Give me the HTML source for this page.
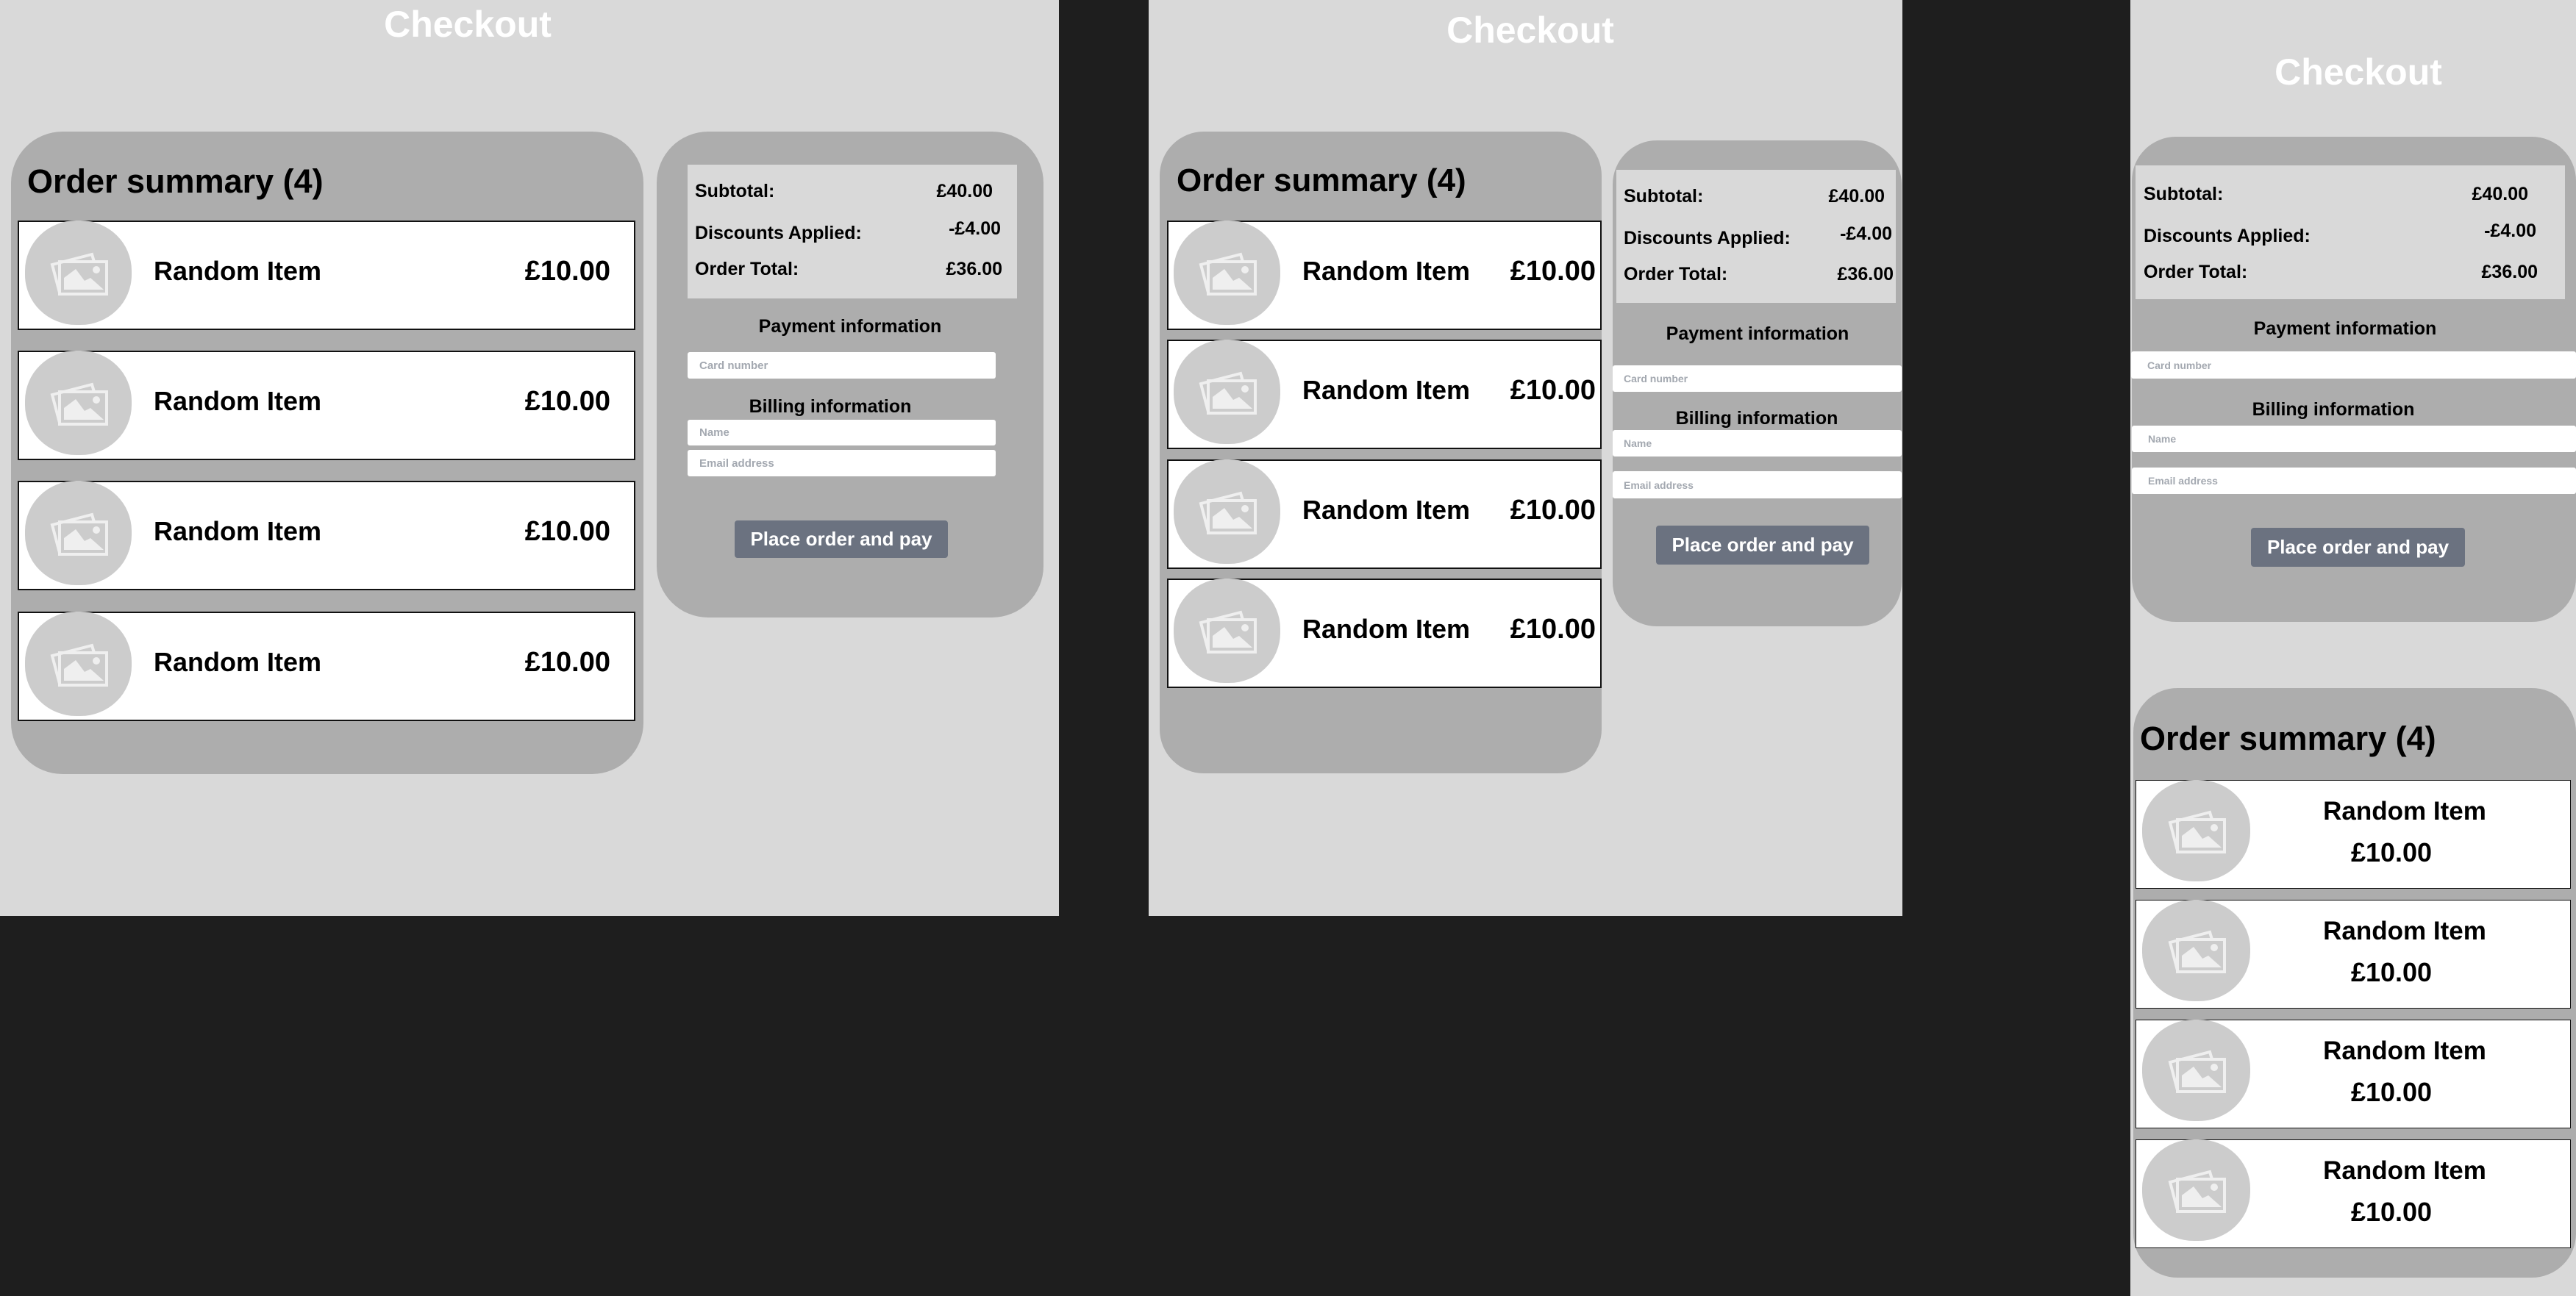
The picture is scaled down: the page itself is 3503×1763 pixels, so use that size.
<!DOCTYPE html>
<html><head><meta charset="utf-8"><style>
*{margin:0;padding:0;box-sizing:border-box}
body{width:3503px;height:1763px;background:#1e1e1e;position:relative;overflow:hidden;font-family:"Liberation Sans",Arial,sans-serif;color:#000}
.bg{position:absolute;background:#d9d9d9}
.pan{position:absolute;background:#adadad}
.tot{position:absolute;background:#d9d9d9}
.t{position:absolute;white-space:nowrap;line-height:1;font-weight:bold}
.c{text-align:center;width:1000px}
.title{font-size:50px;font-weight:bold;color:#fff}
.card{position:absolute;background:#fff;border:2px solid #111}
.circ{position:absolute;background:#cccccc;border-radius:48%;display:flex;align-items:center;justify-content:center}
.inp{position:absolute;background:#fff;border-radius:3px;color:#a3a8b0;font-weight:bold;display:flex;align-items:center}
.btn{position:absolute;background:#6b7280;border-radius:4px;color:#fff;font-weight:bold;display:flex;align-items:center;justify-content:center}
</style></head><body>
<svg width="0" height="0" style="position:absolute"><defs><symbol id="ic" viewBox="0 0 80 62"><g fill="none" stroke="#efefef" stroke-width="4"><path d="M14 58 L4 20 L58 6 L61 16"/><rect x="14" y="16" width="64" height="44"/></g><path d="M20 54 L20 38 L36 26 L48 42 L56 38 L74 54Z" fill="#efefef"/><circle cx="64" cy="27" r="5" fill="#efefef"/></symbol></defs></svg>

<!-- PANEL 1 -->
<div class="bg" style="left:0;top:0;width:1440px;height:1246px"></div>
<div class="t c title" style="left:136px;top:8px">Checkout</div>
<div class="pan" style="left:15px;top:179px;width:860px;height:874px;border-radius:70px"></div>
<div class="t" style="left:37px;top:224px;font-size:45px">Order summary (4)</div>
<div class="card" style="left:24px;top:300px;width:840px;height:149px"></div>
<div class="card" style="left:24px;top:477px;width:840px;height:149px"></div>
<div class="card" style="left:24px;top:654px;width:840px;height:149px"></div>
<div class="card" style="left:24px;top:832px;width:840px;height:149px"></div>
<div class="circ" style="left:34px;top:300px;width:145px;height:142px"><svg width="80" height="62"><use href="#ic"/></svg></div>
<div class="circ" style="left:34px;top:477px;width:145px;height:142px"><svg width="80" height="62"><use href="#ic"/></svg></div>
<div class="circ" style="left:34px;top:654px;width:145px;height:142px"><svg width="80" height="62"><use href="#ic"/></svg></div>
<div class="circ" style="left:34px;top:832px;width:145px;height:142px"><svg width="80" height="62"><use href="#ic"/></svg></div>
<div class="t" style="left:209px;top:351px;font-size:36px">Random Item</div>
<div class="t" style="right:2673px;top:350px;font-size:38px">£10.00</div>
<div class="t" style="left:209px;top:528px;font-size:36px">Random Item</div>
<div class="t" style="right:2673px;top:527px;font-size:38px">£10.00</div>
<div class="t" style="left:209px;top:705px;font-size:36px">Random Item</div>
<div class="t" style="right:2673px;top:704px;font-size:38px">£10.00</div>
<div class="t" style="left:209px;top:883px;font-size:36px">Random Item</div>
<div class="t" style="right:2673px;top:882px;font-size:38px">£10.00</div>
<div class="pan" style="left:893px;top:179px;width:526px;height:661px;border-radius:70px"></div>
<div class="tot" style="left:935px;top:224px;width:448px;height:182px"></div>
<div class="t" style="left:945px;top:248px;font-size:25px">Subtotal:</div>
<div class="t" style="right:2153px;top:248px;font-size:25px">£40.00</div>
<div class="t" style="left:945px;top:305px;font-size:25px">Discounts Applied:</div>
<div class="t" style="right:2142px;top:299px;font-size:25px">-£4.00</div>
<div class="t" style="left:945px;top:354px;font-size:25px">Order Total:</div>
<div class="t" style="right:2140px;top:354px;font-size:25px">£36.00</div>
<div class="t c" style="left:656px;top:432px;font-size:25px">Payment information</div>
<div class="inp" style="left:935px;top:479px;width:419px;height:36px;font-size:15px;padding-left:16px">Card number</div>
<div class="t c" style="left:629px;top:541px;font-size:25px">Billing information</div>
<div class="inp" style="left:935px;top:571px;width:419px;height:35px;font-size:15px;padding-left:16px">Name</div>
<div class="inp" style="left:935px;top:612px;width:419px;height:36px;font-size:15px;padding-left:16px">Email address</div>
<div class="btn" style="left:999px;top:708px;width:290px;height:51px;font-size:26px">Place order and pay</div>

<!-- PANEL 2 -->
<div class="bg" style="left:1562px;top:0;width:1025px;height:1246px"></div>
<div class="t c title" style="left:1581px;top:16px">Checkout</div>
<div class="pan" style="left:1577px;top:179px;width:601px;height:873px;border-radius:60px"></div>
<div class="t" style="left:1600px;top:224px;font-size:44px">Order summary (4)</div>
<div class="card" style="left:1587px;top:300px;width:591px;height:149px"></div>
<div class="card" style="left:1587px;top:462px;width:591px;height:149px"></div>
<div class="card" style="left:1587px;top:625px;width:591px;height:149px"></div>
<div class="card" style="left:1587px;top:787px;width:591px;height:149px"></div>
<div class="circ" style="left:1596px;top:300px;width:145px;height:142px"><svg width="80" height="62"><use href="#ic"/></svg></div>
<div class="circ" style="left:1596px;top:462px;width:145px;height:142px"><svg width="80" height="62"><use href="#ic"/></svg></div>
<div class="circ" style="left:1596px;top:625px;width:145px;height:142px"><svg width="80" height="62"><use href="#ic"/></svg></div>
<div class="circ" style="left:1596px;top:787px;width:145px;height:142px"><svg width="80" height="62"><use href="#ic"/></svg></div>
<div class="t" style="left:1771px;top:351px;font-size:36px">Random Item</div>
<div class="t" style="right:1333px;top:350px;font-size:38px">£10.00</div>
<div class="t" style="left:1771px;top:513px;font-size:36px">Random Item</div>
<div class="t" style="right:1333px;top:512px;font-size:38px">£10.00</div>
<div class="t" style="left:1771px;top:676px;font-size:36px">Random Item</div>
<div class="t" style="right:1333px;top:675px;font-size:38px">£10.00</div>
<div class="t" style="left:1771px;top:838px;font-size:36px">Random Item</div>
<div class="t" style="right:1333px;top:837px;font-size:38px">£10.00</div>
<div class="pan" style="left:2193px;top:191px;width:393px;height:661px;border-radius:60px"></div>
<div class="tot" style="left:2198px;top:231px;width:380px;height:181px"></div>
<div class="t" style="left:2208px;top:255px;font-size:25px">Subtotal:</div>
<div class="t" style="right:940px;top:255px;font-size:25px">£40.00</div>
<div class="t" style="left:2208px;top:312px;font-size:25px">Discounts Applied:</div>
<div class="t" style="right:930px;top:306px;font-size:25px">-£4.00</div>
<div class="t" style="left:2208px;top:361px;font-size:25px">Order Total:</div>
<div class="t" style="right:928px;top:361px;font-size:25px">£36.00</div>
<div class="t c" style="left:1890px;top:442px;font-size:25px">Payment information</div>
<div class="inp" style="left:2193px;top:497px;width:393px;height:36px;font-size:14px;padding-left:15px">Card number</div>
<div class="t c" style="left:1889px;top:557px;font-size:25px">Billing information</div>
<div class="inp" style="left:2193px;top:585px;width:393px;height:36px;font-size:14px;padding-left:15px">Name</div>
<div class="inp" style="left:2193px;top:641px;width:393px;height:37px;font-size:14px;padding-left:15px">Email address</div>
<div class="btn" style="left:2252px;top:715px;width:290px;height:53px;font-size:26px">Place order and pay</div>

<!-- PANEL 3 -->
<div class="bg" style="left:2897px;top:0;width:606px;height:1763px"></div>
<div class="t c title" style="left:2707px;top:73px">Checkout</div>
<div class="pan" style="left:2899px;top:186px;width:604px;height:660px;border-radius:60px"></div>
<div class="tot" style="left:2904px;top:225px;width:584px;height:182px"></div>
<div class="t" style="left:2915px;top:252px;font-size:25px">Subtotal:</div>
<div class="t" style="right:65px;top:252px;font-size:25px">£40.00</div>
<div class="t" style="left:2915px;top:309px;font-size:25px">Discounts Applied:</div>
<div class="t" style="right:54px;top:302px;font-size:25px">-£4.00</div>
<div class="t" style="left:2915px;top:358px;font-size:25px">Order Total:</div>
<div class="t" style="right:52px;top:358px;font-size:25px">£36.00</div>
<div class="t c" style="left:2689px;top:435px;font-size:25px">Payment information</div>
<div class="inp" style="left:2898px;top:478px;width:605px;height:37px;font-size:14px;padding-left:22px">Card number</div>
<div class="t c" style="left:2673px;top:545px;font-size:25px">Billing information</div>
<div class="inp" style="left:2899px;top:579px;width:604px;height:36px;font-size:14px;padding-left:22px">Name</div>
<div class="inp" style="left:2899px;top:636px;width:604px;height:36px;font-size:14px;padding-left:22px">Email address</div>
<div class="btn" style="left:3061px;top:718px;width:291px;height:53px;font-size:26px">Place order and pay</div>
<div class="pan" style="left:2901px;top:936px;width:602px;height:802px;border-radius:60px"></div>
<div class="t" style="left:2910px;top:982px;font-size:45px">Order summary (4)</div>
<div class="card" style="left:2904px;top:1061px;width:592px;height:148px;border-width:1.5px"></div>
<div class="card" style="left:2904px;top:1224px;width:592px;height:148px;border-width:1.5px"></div>
<div class="card" style="left:2904px;top:1387px;width:592px;height:148px;border-width:1.5px"></div>
<div class="card" style="left:2904px;top:1550px;width:592px;height:148px;border-width:1.5px"></div>
<div class="circ" style="left:2913px;top:1061px;width:147px;height:138px"><svg width="80" height="62"><use href="#ic"/></svg></div>
<div class="circ" style="left:2913px;top:1224px;width:147px;height:138px"><svg width="80" height="62"><use href="#ic"/></svg></div>
<div class="circ" style="left:2913px;top:1387px;width:147px;height:138px"><svg width="80" height="62"><use href="#ic"/></svg></div>
<div class="circ" style="left:2913px;top:1550px;width:147px;height:138px"><svg width="80" height="62"><use href="#ic"/></svg></div>
<div class="t c" style="left:2770px;top:1086px;font-size:35px">Random Item</div>
<div class="t c" style="left:2752px;top:1142px;font-size:36px">£10.00</div>
<div class="t c" style="left:2770px;top:1249px;font-size:35px">Random Item</div>
<div class="t c" style="left:2752px;top:1305px;font-size:36px">£10.00</div>
<div class="t c" style="left:2770px;top:1412px;font-size:35px">Random Item</div>
<div class="t c" style="left:2752px;top:1468px;font-size:36px">£10.00</div>
<div class="t c" style="left:2770px;top:1575px;font-size:35px">Random Item</div>
<div class="t c" style="left:2752px;top:1631px;font-size:36px">£10.00</div>
</body></html>
